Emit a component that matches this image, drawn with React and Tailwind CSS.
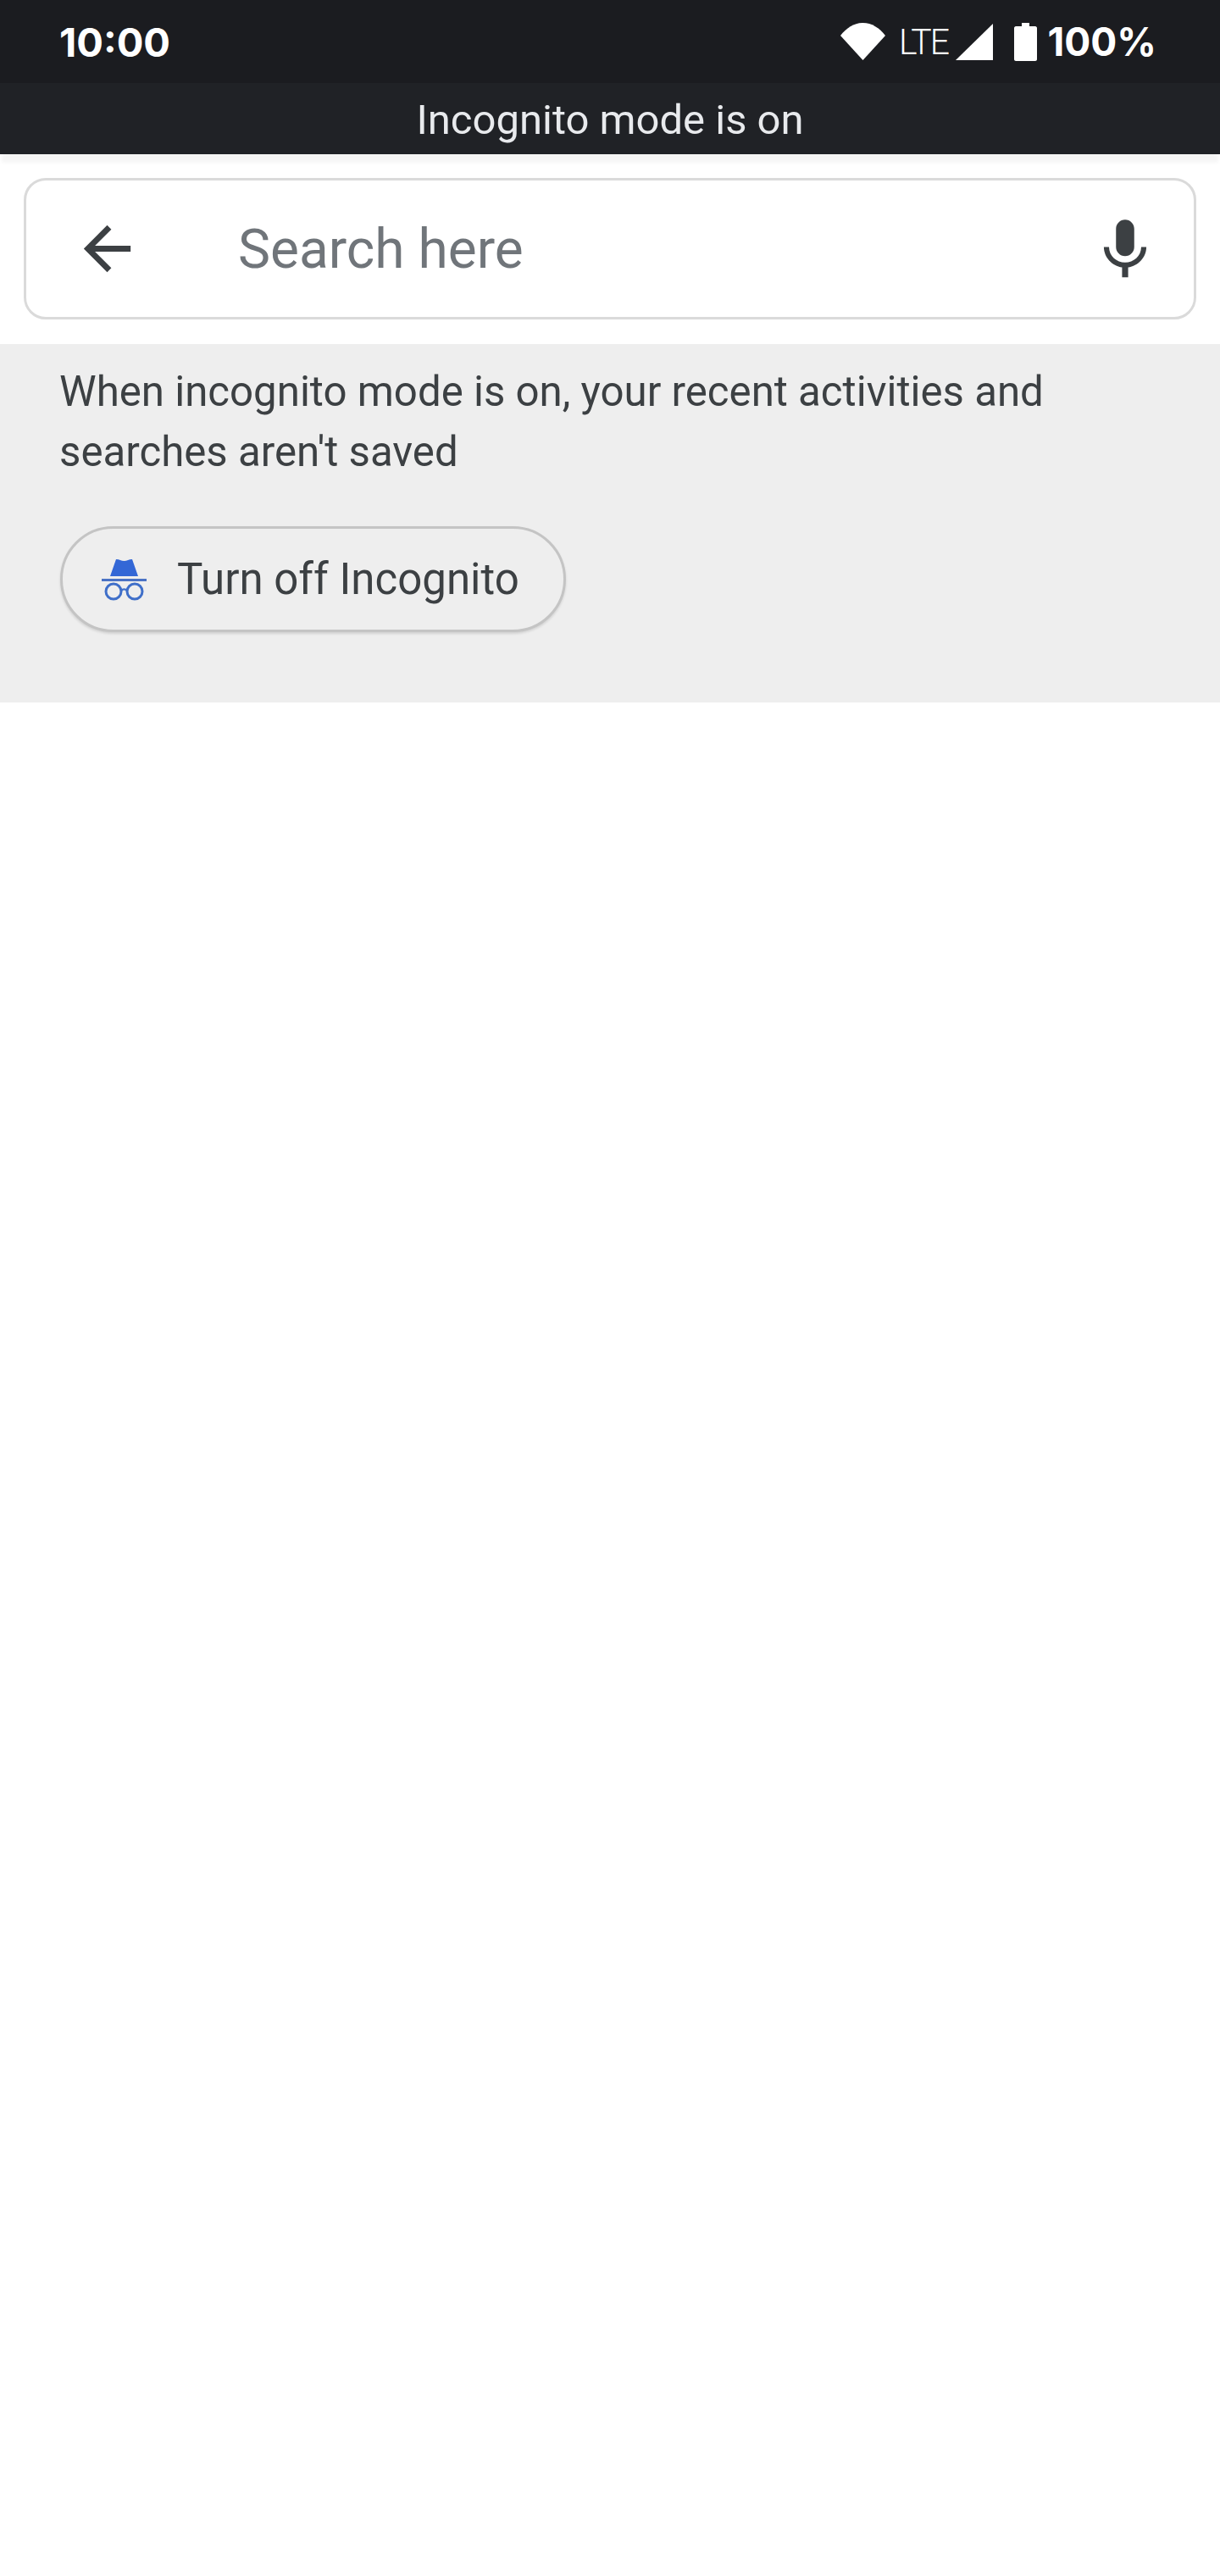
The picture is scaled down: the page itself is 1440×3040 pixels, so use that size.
import React from "react";

const StatusIcons = () => (
  <div className="flex items-center">
    <svg width="53" height="44" viewBox="0 0 53 44" className="block">
      <path d="M0 15C7 6 16 0 26.500 0S46 6 53 15L26.500 44Z" fill="#fff" />
    </svg>
    <span className="ml-[16px] w-[58px] text-[43px] leading-none font-light text-white tracking-[-2px] font-['Roboto',sans-serif] scale-x-95 origin-left">
      LTE
    </span>
    <svg width="44" height="43" viewBox="0 0 44 43" className="ml-[9px] block">
      <path d="M0 43L44 0V43Z" fill="#fff" />
    </svg>
    <svg width="27" height="45" viewBox="0 0 27 45" className="ml-[25px] block">
      <path d="M9 0H18V4H25C26 4 27 5 27 6V43C27 44 26 45 25 45H2C1 45 0 44 0 43V6C0 5 1 4 2 4H9Z" fill="#fff" />
    </svg>
    <span className="ml-[12px] text-[46px] leading-none font-bold text-white font-['Inter',sans-serif]">
      100%
    </span>
  </div>
);

const IncognitoIcon = () => (
  <svg width="53" height="50" viewBox="0 0 53 50" className="block shrink-0">
    <path d="M10 21L17 1C21 1 23 3 26.500 3S32 1 36 1L43 21Z" fill="#3367d6" />
    <rect x="0" y="24" width="53" height="3" fill="#4a72c4" />
    <circle cx="14" cy="39" r="9" fill="none" stroke="#3f6fc9" strokeWidth="3" />
    <circle cx="39" cy="39" r="9" fill="none" stroke="#3f6fc9" strokeWidth="3" />
    <path d="M23 38C25 36 28 36 30 38" fill="none" stroke="#3f6fc9" strokeWidth="2.500" />
  </svg>
);

export default function App() {
  return (
    <div className="min-h-[3040px] bg-white font-['Roboto',sans-serif]">
      <div className="flex h-[98px] items-center justify-between bg-[#1b1c20] pl-[70px] pr-[75px]">
        <span className="text-[47px] leading-none font-bold text-white font-['Inter',sans-serif]">
          10:00
        </span>
        <StatusIcons />
      </div>
      <div className="relative flex h-[84px] items-center justify-center bg-[#202226] pt-[4px] text-[49px] text-[#e8eaed] shadow-[0_12px_4px_-2px_rgba(0,0,0,0.04)]">
        Incognito mode is on
      </div>

      <div className="px-[28px] pt-[28px] pb-[29px]">
        <div className="flex h-[167px] items-center justify-between rounded-[26px] border-[3px] border-[#dadada] bg-white pl-[54px] pr-[38px]">
          <div className="flex items-center">
            <svg width="83" height="83" viewBox="0 0 24 24" fill="#3c4043" className="block shrink-0">
              <path d="M20 11H7.830l5.590-5.590L12 4l-8 8 8 8 1.410-1.410L7.830 13H20v-2z" />
            </svg>
            <span className="ml-[113px] pt-[3px] text-[64px] leading-none text-[#70757a]">Search here</span>
          </div>
          <svg width="86" height="86" viewBox="0 0 24 24" fill="#3c4043" className="mt-[2px] block shrink-0">
            <path d="M12 14c1.660 0 3-1.340 3-3V5c0-1.660-1.340-3-3-3S9 3.340 9 5v6c0 1.660 1.340 3 3 3zm5.300-3c0 3-2.540 5.100-5.300 5.100S6.700 14 6.700 11H5c0 3.410 2.720 6.230 6 6.720V21h2v-3.280c3.280-.48 6-3.300 6-6.720h-1.700z" />
          </svg>
        </div>
      </div>

      <div className="bg-[#eeeeee] pl-[70px] pt-[21px] pb-[83px]">
        <p className="w-[1240px] text-[49.2px] leading-[71px] text-[#3c4043]">
          When incognito mode is on, your recent activities and searches aren't saved
        </p>
        <button className="mt-[52px] ml-[1px] flex h-[125px] w-[597px] items-center rounded-full border-[3px] border-[#c4c4c4] bg-[#eeeeee] pl-[46px] shadow-[0_2px_3px_rgba(0,0,0,0.12)]">
          <IncognitoIcon />
          <span className="ml-[36px] text-[51px] leading-none text-[#3c4043]">Turn off Incognito</span>
        </button>
      </div>
    </div>
  );
}
